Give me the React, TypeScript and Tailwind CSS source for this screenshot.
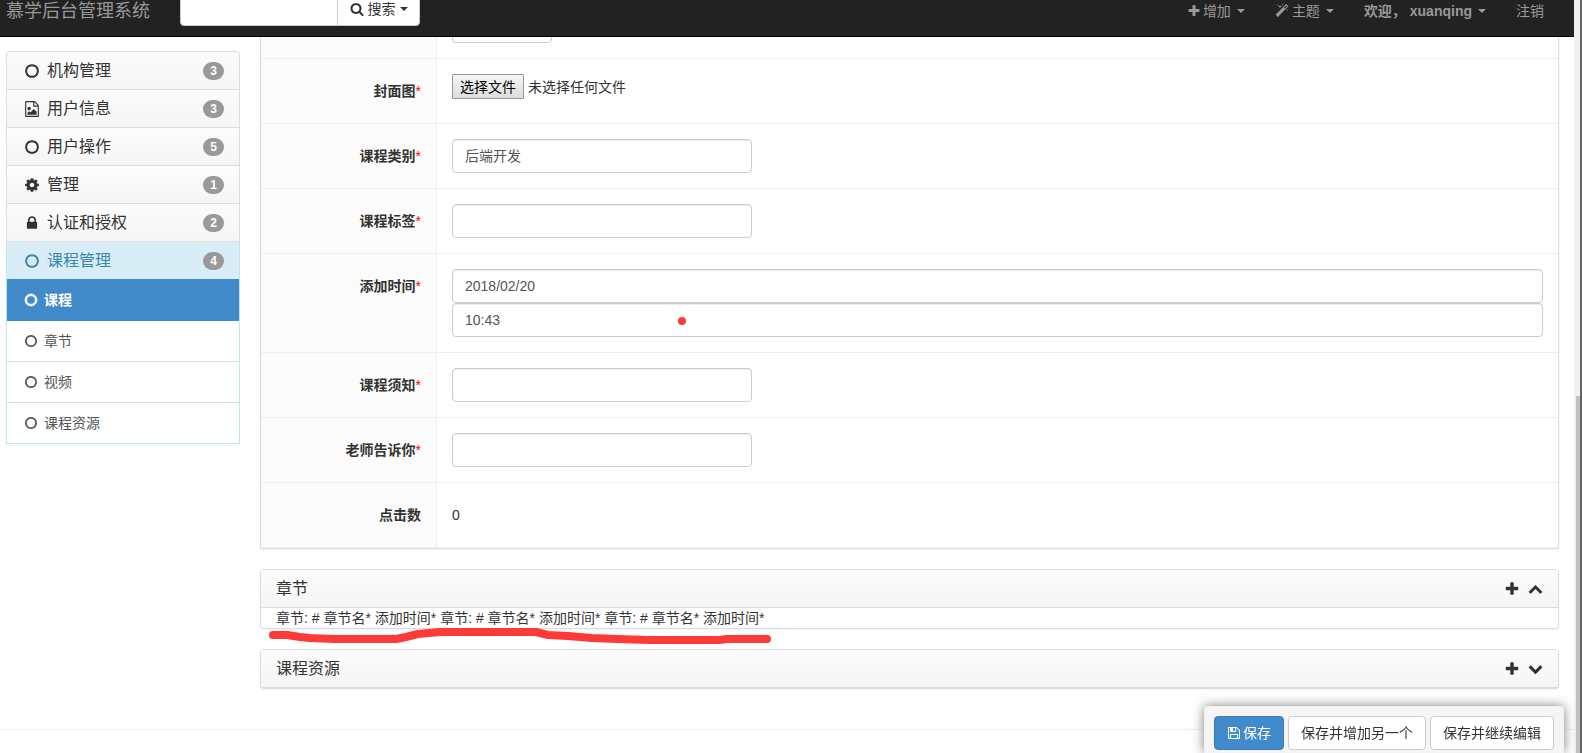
import type { ReactNode } from "react";

const ICONS = {
  search:
    "M1216 832q0-185-131.5-316.5t-316.5-131.5-316.5 131.5-131.5 316.5 131.5 316.5 316.5 131.5 316.5-131.5 131.5-316.5zm512 832q0 52-38 90t-90 38q-54 0-90-38l-343-342q-179 124-399 124-143 0-273.5-55.5t-225-150-150-225-55.5-273.5 55.5-273.5 150-225 225-150 273.5-55.5 273.5 55.5 225 150 150 225 55.5 273.5q0 220-124 399l343 343q37 37 37 90z",
  plus: "M1600 736v192q0 40-28 68t-68 28h-416v416q0 40-28 68t-68 28h-192q-40 0-68-28t-28-68v-416h-416q-40 0-68-28t-28-68v-192q0-40 28-68t68-28h416v-416q0-40 28-68t68-28h192q40 0 68 28t28 68v416h416q40 0 68 28t28 68z",
  lock: "M640 768h512v-192q0-106-75-181t-181-75-181 75-75 181v192zm832 96v576q0 40-28 68t-68 28h-960q-40 0-68-28t-28-68v-576q0-40 28-68t68-28h32v-192q0-184 132-316t316-132 316 132 132 316v192h32q40 0 68 28t28 68z",
  cog: "M1152 896q0-106-75-181t-181-75-181 75-75 181 75 181 181 75 181-75 75-181zm512-109v222q0 12-8 23t-20 13l-185 28q-19 54-39 91 35 50 107 138 10 12 10 25t-9 23q-27 37-99 108t-94 71q-12 0-26-9l-138-108q-44 23-91 38-16 136-29 186-7 28-36 28h-222q-14 0-24.5-8.5t-11.5-21.5l-28-184q-49-16-90-37l-141 107q-10 9-25 9-14 0-25-11-126-114-165-168-7-10-7-23 0-12 8-23 15-21 51-66.5t54-70.5q-27-50-41-99l-183-27q-13-2-21-12.5t-8-23.5v-222q0-12 8-23t19-13l186-28q14-46 39-92-40-57-107-138-10-12-10-24 0-10 9-23 26-36 98.5-107.5t94.5-71.5q13 0 26 10l138 107q44-23 91-38 16-136 29-186 7-28 36-28h222q14 0 24.5 8.5t11.5 21.5l28 184q49 16 90 37l142-107q9-9 24-9 13 0 25 10 129 119 165 170 7 8 7 22 0 12-8 23-15 21-51 66.5t-54 70.5q26 50 41 98l183 28q13 2 21 12.5t8 23.5z",
  up: "M1683 1331l-166 165q-19 19-45 19t-45-19l-531-531-531 531q-19 19-45 19t-45-19l-166-165q-19-19-19-45.5t19-45.5l742-741q19-19 45-19t45 19l742 741q19 19 19 45.5t-19 45.5z",
  down: "M1683 808l-742 741q-19 19-45 19t-45-19l-742-741q-19-19-19-45.5t19-45.5l166-165q19-19 45-19t45 19l531 531 531-531q19-19 45-19t45 19l166 165q19 19 19 45.5t-19 45.5z",
  save: "M512 1536h768v-384h-768v384zm896 0h128v-896q0-14-10-38.5t-20-34.5l-281-281q-10-10-34-20t-39-10v416q0 40-28 68t-68 28h-576q-40 0-68-28t-28-68v-416h-128v1280h128v-416q0-40 28-68t68-28h832q40 0 68 28t28 68v416zm-384-928v-320q0-13-9.5-22.5t-22.5-9.5h-192q-13 0-22.5 9.5t-9.5 22.5v320q0 13 9.5 22.5t22.5 9.5h192q13 0 22.5-9.5t9.5-22.5zm640 32v928q0 40-28 68t-68 28h-1344q-40 0-68-28t-28-68v-1344q0-40 28-68t68-28h928q40 0 88 20t76 48l280 280q28 28 48 76t20 88z",
  image:
    "M1596 380q28 28 48 76t20 88v1152q0 40-28 68t-68 28h-1344q-40 0-68-28t-28-68v-1600q0-40 28-68t68-28h896q40 0 88 20t76 48zm-444-244v376h376q-10-29-22-41l-313-313q-12-12-41-22zm384 1528v-1024h-416q-40 0-68-28t-28-68v-416h-768v1536h1280zm-128-448v320h-1024v-192l192-192 128 128 384-384zm-832-192q-80 0-136-56t-56-136 56-136 136-56 136 56 56 136-56 136-136 56z",
  magic:
    "M1254 581l293-293-107-107-293 293zm447-293q0 27-18 45l-1286 1286q-18 18-45 18t-45-18l-198-198q-18-18-18-45t18-45l1286-1286q18-18 45-18t45 18l198 198q18 18 18 45zm-1351-190l98 30-98 30-30 98-30-98-98-30 98-30 30-98zm350 162l196 60-196 60-60 196-60-196-196-60 196-60 60-196zm930 478l98 30-98 30-30 98-30-98-98-30 98-30 30-98zm-640-640l98 30-98 30-30 98-30-98-98-30 98-30 30-98z",
  circle:
    "M896 352q-148 0-273 73t-198 198-73 273 73 273 198 198 273 73 273-73 198-198 73-273-73-273-198-198-273-73zm768 544q0 209-103 385.5t-279.5 279.5-385.5 103-385.5-103-279.5-279.5-103-385.5 103-385.5 279.5-279.5 385.5-103 385.5 103 279.5 279.5 103 385.5z",
};

type IconName = keyof typeof ICONS;

function Icon({ name, className = "size-4" }: { name: IconName; className?: string }) {
  return (
    <svg
      viewBox="0 0 1792 1792"
      fill="currentColor"
      aria-hidden="true"
      className={`shrink-0 overflow-visible ${className}`}
    >
      <path d={ICONS[name]} />
    </svg>
  );
}

function Caret() {
  return <span className="size-0 border-x-4 border-t-4 border-x-transparent border-t-current" />;
}

const menus: { label: string; icon: IconName; count: number }[] = [
  { label: "机构管理", icon: "circle", count: 3 },
  { label: "用户信息", icon: "image", count: 3 },
  { label: "用户操作", icon: "circle", count: 5 },
  { label: "管理", icon: "cog", count: 1 },
  { label: "认证和授权", icon: "lock", count: 2 },
];

const subMenus = ["章节", "视频", "课程资源"];

const inputClass =
  "block h-[34px] rounded border border-[#ccc] bg-white px-3 text-sm text-[#555] shadow-[inset_0_1px_1px_rgba(0,0,0,0.075)] outline-none";

function Badge({ count }: { count: number }) {
  return (
    <span className="flex h-[18px] w-[21px] items-center justify-center rounded-full bg-[#999] text-xs font-bold text-white">
      {count}
    </span>
  );
}

function Navbar() {
  return (
    <header className="flex h-[37px] shrink-0 items-end border-b border-black bg-[#222] text-[#999]">
      <a href="#" className="w-[174px] pb-[11px] pl-[6px] text-lg leading-7">
        慕学后台管理系统
      </a>
      <form className="mb-[10px] flex h-[34px] pl-[6px]" onSubmit={(e) => e.preventDefault()}>
        <input
          type="text"
          aria-label="搜索"
          className="w-[158px] rounded-l border border-[#ccc] bg-white px-3 text-sm text-[#555] outline-none"
        />
        <button
          type="submit"
          className="-ml-px flex w-[83px] items-center justify-center gap-1 rounded-r border border-[#ccc] bg-white text-sm text-[#333]"
        >
          <Icon name="search" className="size-[14px]" />
          搜索
          <Caret />
        </button>
      </form>
      <nav className="mr-[30px] mb-[15px] ml-auto flex gap-[30px] text-sm leading-5">
        <a href="#" className="flex items-center gap-[6px]">
          <span className="flex items-center gap-[2px]">
            <Icon name="plus" className="size-[14px]" />
            增加
          </span>
          <Caret />
        </a>
        <a href="#" className="flex items-center gap-[6px]">
          <span className="flex items-center gap-[3px]">
            <Icon name="magic" className="size-[14px]" />
            主题
          </span>
          <Caret />
        </a>
        <a href="#" className="flex items-center gap-[6px] font-bold">
          欢迎， xuanqing
          <Caret />
        </a>
        <a href="#">注销</a>
      </nav>
    </header>
  );
}

function Sidebar() {
  return (
    <aside className="mt-[14px] w-[234px] shrink-0 self-start rounded shadow-xs">
      <div className="overflow-hidden rounded-t border border-b-0 border-[#ddd]">
        {menus.map((menu) => (
          <a
            key={menu.label}
            href="#"
            className="flex h-[38px] items-center border-b border-[#ddd] bg-linear-to-b from-[#fcfcfc] to-[#f5f5f5] pr-[15px] pl-[17px] text-base text-[#333]"
          >
            <Icon name={menu.icon} />
            <span className="ml-[7px] flex-1">{menu.label}</span>
            <Badge count={menu.count} />
          </a>
        ))}
      </div>
      <div className="border border-t-0 border-[#bce8f1] bg-white">
        <a href="#" className="flex h-[37px] items-center bg-[#d9edf7] pr-[15px] pl-[17px] text-base text-[#3a87ad]">
          <Icon name="circle" />
          <span className="ml-[7px] flex-1">课程管理</span>
          <Badge count={4} />
        </a>
        <a href="#" className="flex h-[42px] items-center gap-[6px] bg-[#428bca] pl-[17px] text-sm font-bold text-white">
          <Icon name="circle" className="size-[14px] stroke-current stroke-[80]" />
          课程
        </a>
        {subMenus.map((label) => (
          <a
            key={label}
            href="#"
            className="flex h-[41px] items-center gap-[6px] border-b border-[#ddd] pl-[17px] text-sm text-[#555] last:h-10 last:border-b-0"
          >
            <Icon name="circle" className="size-[14px]" />
            {label}
          </a>
        ))}
      </div>
    </aside>
  );
}

interface FieldProps {
  label: string;
  id?: string;
  required?: boolean;
  children: ReactNode;
}

function Field({ label, id, required, children }: FieldProps) {
  return (
    <div className="flex border-b border-[#eee] text-sm">
      <div className="w-[176px] shrink-0 border-r border-[#eee] bg-[#fbfbfb] pt-[22px] pr-[15px] text-right leading-5 font-bold">
        <label htmlFor={id}>{label}</label>
        {required && <span className="font-normal text-[#f00]">*</span>}
      </div>
      <div className="min-h-16 flex-1 p-[15px]">{children}</div>
    </div>
  );
}

function CourseForm() {
  return (
    <section className="border border-t-0 border-[#ddd] shadow-xs">
      {/* Tail of the row that is scrolled under the navbar */}
      <div className="flex h-[22px] border-b border-[#eee]">
        <div className="w-[176px] shrink-0 border-r border-[#eee] bg-[#fbfbfb]" />
        <div className="flex items-end overflow-hidden px-[15px] pb-[15px]">
          <input type="text" aria-label="学习时长" className={`${inputClass} w-[100px] shrink-0`} />
        </div>
      </div>
      <Field label="封面图" id="image" required>
        <input id="image" type="file" className="sr-only" />
        <label htmlFor="image" className="flex items-center gap-1 text-[#333]">
          <span className="flex h-[25px] w-[72px] items-center justify-center rounded-[1px] border border-[#999] bg-linear-to-b from-[#f6f6f6] to-[#dcdcdc] text-black">
            选择文件
          </span>
          未选择任何文件
        </label>
      </Field>
      <Field label="课程类别" id="category" required>
        <select id="category" className={`${inputClass} w-[300px] appearance-none`}>
          <option>后端开发</option>
        </select>
      </Field>
      <Field label="课程标签" id="tag" required>
        <input id="tag" type="text" className={`${inputClass} w-[300px]`} />
      </Field>
      <Field label="添加时间" id="date" required>
        <input id="date" type="text" defaultValue="2018/02/20" className={`${inputClass} w-full`} />
        <div className="relative">
          <input type="text" aria-label="时间" defaultValue="10:43" className={`${inputClass} w-full`} />
          <span className="absolute top-[14px] left-[226px] size-2 rounded-full bg-[#fc3a38]" />
        </div>
      </Field>
      <Field label="课程须知" id="notice" required>
        <input id="notice" type="text" className={`${inputClass} w-[300px]`} />
      </Field>
      <Field label="老师告诉你" id="teacher" required>
        <input id="teacher" type="text" className={`${inputClass} w-[300px]`} />
      </Field>
      <Field label="点击数">
        <p className="pt-[7px] leading-5">0</p>
      </Field>
    </section>
  );
}

function Panel({ title, open, children }: { title: string; open?: boolean; children?: ReactNode }) {
  return (
    <section className="mt-5 rounded-[3px] border border-[#ddd] bg-white shadow-xs">
      <div className="flex h-[38px] items-center justify-between border-b border-[#ddd] bg-linear-to-b from-[#fcfcfc] to-[#f5f5f5] px-[15px]">
        <h3 className="text-base">{title}</h3>
        <div className="flex items-center gap-2">
          <button type="button" aria-label="添加">
            <Icon name="plus" />
          </button>
          <button type="button" aria-label={open ? "收起" : "展开"}>
            <Icon name={open ? "up" : "down"} className="size-[15px]" />
          </button>
        </div>
      </div>
      {children}
    </section>
  );
}

function Underline() {
  return (
    <svg
      width="504"
      height="18"
      viewBox="0 0 504 18"
      fill="none"
      stroke="#fc3a38"
      strokeWidth="8"
      strokeLinecap="round"
      strokeLinejoin="round"
      aria-hidden="true"
      className="absolute top-[20px] left-[7px]"
    >
      <path d="M5 7L19 7L32 9L42 10L66 11L128 11L138 9L150 6L172 4L268 4L280 7L300 8L324 10L349 11L381 12L451 12L459 11L499 11" />
    </svg>
  );
}

function SaveBar() {
  return (
    <div className="fixed right-[18px] bottom-0 flex gap-1 rounded-t border border-b-0 border-[#eee] bg-[#f5f5f5] px-[9px] pt-[9px] pb-[3px] text-sm text-[#333] shadow-[0_0_12px_rgba(0,0,0,0.5)]">
      <button
        type="submit"
        className="flex h-[34px] items-center gap-[2px] rounded border border-[#357ebd] bg-[#428bca] px-3 text-white"
      >
        <Icon name="save" className="size-[14px]" />
        保存
      </button>
      <button type="submit" className="h-[34px] rounded border border-[#ccc] bg-white px-3">
        保存并增加另一个
      </button>
      <button type="submit" className="h-[34px] rounded border border-[#ccc] bg-white px-3">
        保存并继续编辑
      </button>
    </div>
  );
}

export default function App() {
  return (
    <div className="flex h-screen overflow-hidden bg-white font-['Liberation_Sans','Noto_Sans_CJK_SC',sans-serif] text-[#333]">
      <div className="flex min-w-0 flex-1 flex-col">
        <Navbar />
        <div className="flex gap-5 pr-[15px] pl-[6px]">
          <Sidebar />
          <main className="min-w-0 flex-1">
            <CourseForm />
            <Panel title="章节" open>
              <div className="relative h-5 px-[15px] text-sm leading-5">
                章节: # 章节名* 添加时间* 章节: # 章节名* 添加时间* 章节: # 章节名* 添加时间*
                <Underline />
              </div>
            </Panel>
            <Panel title="课程资源" />
          </main>
        </div>
        <hr className="mt-10 border-[#eee]" />
        <SaveBar />
      </div>
      {/* Scroll track and window edge */}
      <div className="w-[8px] shrink-0 border-r-2 border-[#666] bg-[#f0f0f0] pt-[396px] pl-[2px]" aria-hidden="true">
        <div className="h-full bg-[#c1c1c1]" />
      </div>
    </div>
  );
}
